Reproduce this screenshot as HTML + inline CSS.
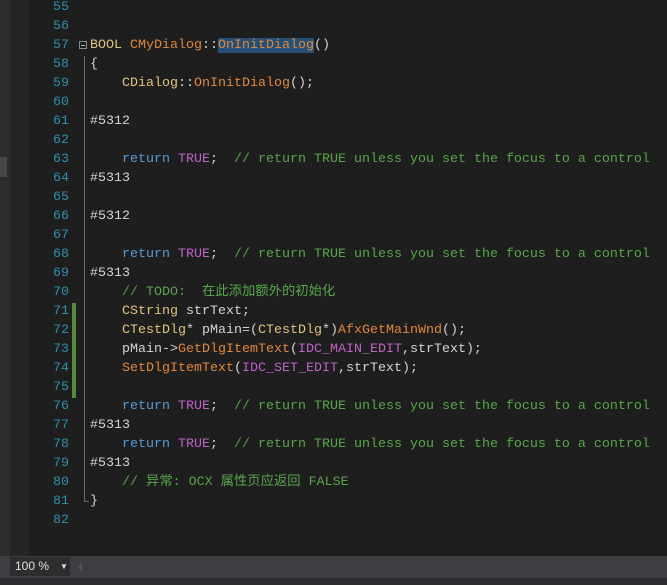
<!DOCTYPE html>
<html><head><meta charset="utf-8"><style>
body{margin:0;width:667px;height:585px;background:#1e1e1e;overflow:hidden;position:relative;font-family:"Liberation Mono","Noto Sans CJK SC",monospace;font-size:13.33px}
.s1{position:absolute;left:0;top:0;width:10px;height:556px;background:#2d2d30}
.sb{position:absolute;left:0;top:157px;width:7px;height:20px;background:#45454a}
.s2{position:absolute;left:10px;top:0;width:19px;height:556px;background:#252526}
.w{position:absolute;left:0;top:3px;width:667px;height:553px}
.ln{position:absolute;left:29px;width:40px;text-align:right;color:#2b91af;height:19px;line-height:19px}
.c{position:absolute;left:90px;height:19px;line-height:19px;white-space:pre;color:#d4d4d4}
.k{color:#569cd6}.t{color:#e0c47a}.f{color:#e0883a}.m{color:#bd63c5}.g{color:#57a64a}
.sel{background:#264f78;color:#e0883a}
.ol{position:absolute;left:84px;top:53px;width:1px;height:446px;background:#6a6a6a}
.olb{position:absolute;left:84px;top:498px;width:5px;height:1px;background:#6a6a6a}
.box{position:absolute;left:79px;top:38px;width:8px;height:8px;border:1px solid #8a8a8a;box-sizing:border-box}
.box:after{content:"";position:absolute;left:1px;top:3px;width:4px;height:1px;background:#aaa}
.gb{position:absolute;left:72px;top:300px;width:4px;height:95px;background:#578a3a}
.st{position:absolute;left:0;top:556px;width:667px;height:22px;background:#3e3e42}
.zb{position:absolute;left:10px;top:557px;width:60px;height:19px;background:#2d2d30;color:#e0e0e0;font-family:"Liberation Sans",sans-serif;font-size:12px;line-height:19px;padding-left:5px;box-sizing:border-box}
.bt{position:absolute;left:0;top:578px;width:667px;height:7px;background:#2d2d30}
</style></head><body>
<div class="s1"></div><div class="sb"></div><div class="s2"></div>
<div class="w">
<div class="ol"></div><div class="olb"></div><div class="box"></div><div class="gb"></div>
<div class="ln" style="top:-5px">55</div>
<div class="ln" style="top:14px">56</div>
<div class="ln" style="top:33px">57</div>
<div class="ln" style="top:52px">58</div>
<div class="ln" style="top:71px">59</div>
<div class="ln" style="top:90px">60</div>
<div class="ln" style="top:109px">61</div>
<div class="ln" style="top:128px">62</div>
<div class="ln" style="top:147px">63</div>
<div class="ln" style="top:166px">64</div>
<div class="ln" style="top:185px">65</div>
<div class="ln" style="top:204px">66</div>
<div class="ln" style="top:223px">67</div>
<div class="ln" style="top:242px">68</div>
<div class="ln" style="top:261px">69</div>
<div class="ln" style="top:280px">70</div>
<div class="ln" style="top:299px">71</div>
<div class="ln" style="top:318px">72</div>
<div class="ln" style="top:337px">73</div>
<div class="ln" style="top:356px">74</div>
<div class="ln" style="top:375px">75</div>
<div class="ln" style="top:394px">76</div>
<div class="ln" style="top:413px">77</div>
<div class="ln" style="top:432px">78</div>
<div class="ln" style="top:451px">79</div>
<div class="ln" style="top:470px">80</div>
<div class="ln" style="top:489px">81</div>
<div class="ln" style="top:508px">82</div>
<div class="c" style="top:33px"><span class="t">BOOL</span> <span class="f">CMyDialog</span>::<span class="sel">OnInitDialog</span>()</div>
<div class="c" style="top:52px">{</div>
<div class="c" style="top:71px">    <span class="t">CDialog</span>::<span class="f">OnInitDialog</span>();</div>
<div class="c" style="top:109px">#5312</div>
<div class="c" style="top:147px">    <span class="k">return</span> <span class="m">TRUE</span>;  <span class="g">// return TRUE unless you set the focus to a control</span></div>
<div class="c" style="top:166px">#5313</div>
<div class="c" style="top:204px">#5312</div>
<div class="c" style="top:242px">    <span class="k">return</span> <span class="m">TRUE</span>;  <span class="g">// return TRUE unless you set the focus to a control</span></div>
<div class="c" style="top:261px">#5313</div>
<div class="c" style="top:280px">    <span class="g">// TODO:  在此添加额外的初始化</span></div>
<div class="c" style="top:299px">    <span class="t">CString</span> strText;</div>
<div class="c" style="top:318px">    <span class="t">CTestDlg</span>* pMain=(<span class="t">CTestDlg</span>*)<span class="f">AfxGetMainWnd</span>();</div>
<div class="c" style="top:337px">    pMain-&gt;<span class="f">GetDlgItemText</span>(<span class="m">IDC_MAIN_EDIT</span>,strText);</div>
<div class="c" style="top:356px">    <span class="f">SetDlgItemText</span>(<span class="m">IDC_SET_EDIT</span>,strText);</div>
<div class="c" style="top:394px">    <span class="k">return</span> <span class="m">TRUE</span>;  <span class="g">// return TRUE unless you set the focus to a control</span></div>
<div class="c" style="top:413px">#5313</div>
<div class="c" style="top:432px">    <span class="k">return</span> <span class="m">TRUE</span>;  <span class="g">// return TRUE unless you set the focus to a control</span></div>
<div class="c" style="top:451px">#5313</div>
<div class="c" style="top:470px">    <span class="g">// 异常: OCX 属性页应返回 FALSE</span></div>
<div class="c" style="top:489px">}</div>
</div>
<div class="st"></div>
<div class="zb">100 % <span style="position:absolute;left:50px;font-size:8px">▼</span></div>
<div style="position:absolute;left:78px;top:562px;width:0;height:0;border-top:5px solid transparent;border-bottom:5px solid transparent;border-right:4px solid #555"></div>
<div class="bt"></div>
</body></html>
